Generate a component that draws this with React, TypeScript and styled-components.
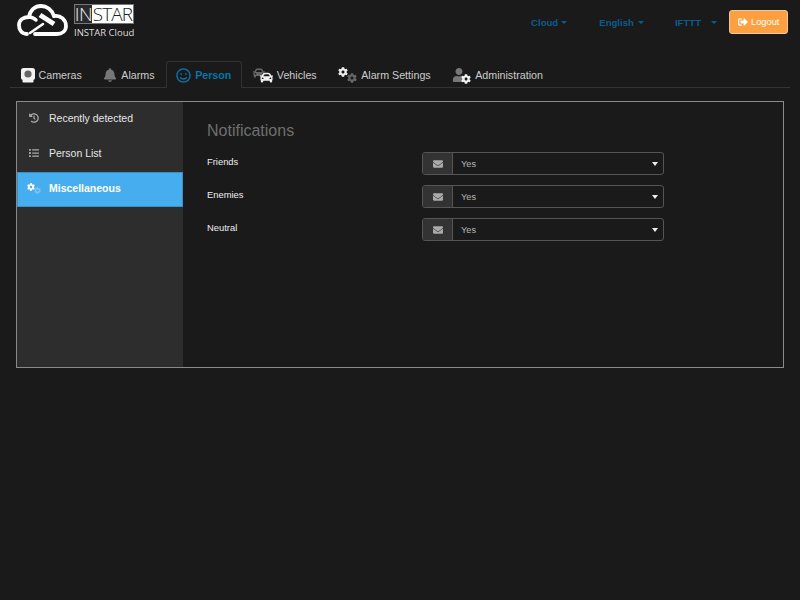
import React, { FC, ReactNode } from 'react';
import styled, { createGlobalStyle } from 'styled-components';
import { FaBell, FaCar, FaCog, FaEnvelope, FaHistory, FaList, FaRegSmile, FaSignOutAlt, FaUser } from 'react-icons/fa';

const GlobalStyle = createGlobalStyle`
    html, body {
        margin: 0;
        padding: 0;
        background: #1a1a1a;
        font-family: "Liberation Sans", Arial, sans-serif;
        font-size: 11px;
        color: #eee;
    }
`;

const Page = styled.div`
    width: 800px;
    height: 600px;
    overflow: hidden;
    background: #1a1a1a;
`;

const Header = styled.header`
    display: flex;
    justify-content: space-between;
    height: 61px;
    padding: 3px 12px 0 17px;
    box-sizing: border-box;
`;

const Brand = styled.div`
    display: flex;
    gap: 5px;
`;

const BrandText = styled.div`
    display: flex;
    flex-direction: column;
    padding-top: 1px;
`;

const BrandMark = styled.div`
    display: flex;
    width: 60px;
    height: 20px;
    background: #fff;
    border: 1px solid #777;
    box-sizing: border-box;
    font-size: 19px;
    line-height: 18px;
    font-family: "Open Sans", sans-serif;
    font-weight: 300;
    color: #222;
`;

const BrandIn = styled.span`
    display: flex;
    justify-content: center;
    width: 17px;
    background: #2a2a2a;
    color: #eee;
    letter-spacing: -0.5px;
`;

const BrandStar = styled.span`
    flex: 1;
    text-align: center;
    letter-spacing: -0.9px;
`;

const BrandName = styled.span`
    margin-top: 2px;
    font-family: "Open Sans", sans-serif;
    font-size: 9.5px;
    font-weight: 500;
    line-height: 14px;
    color: #ddd;
`;

const TopNav = styled.nav`
    display: flex;
    align-items: flex-start;
    padding-top: 7px;
`;

const TopLink = styled.a<{ $gap: number; $after: number }>`
    display: flex;
    align-items: center;
    gap: ${p => p.$gap}px;
    margin-right: ${p => p.$after}px;
    height: 24px;
    font-size: 9.6px;
    font-weight: 700;
    color: #0b5c8e;
`;

const Caret = styled.i`
    width: 0;
    height: 0;
    border-left: 3px solid transparent;
    border-right: 3px solid transparent;
    border-top: 3px solid currentColor;
`;

const LogoutButton = styled.button`
    display: flex;
    align-items: center;
    gap: 3px;
    width: 59px;
    height: 24px;
    padding: 0 0 0 8px;
    background: #ffa040;
    border: 1px solid #e8c9a8;
    border-radius: 3px;
    color: #fff;
    font-family: inherit;
    font-size: 9.3px;
    box-sizing: border-box;
`;

const Tabs = styled.div`
    display: flex;
    margin: 0 10px;
    height: 27px;
    border-bottom: 1px solid #333;
    box-sizing: border-box;
`;

const Tab = styled.div<{ $active?: boolean }>`
    display: flex;
    align-items: center;
    gap: 4px;
    height: 27px;
    padding: 1px 10px 0 9.5px;
    box-sizing: border-box;
    font-size: 10.7px;
    color: ${p => (p.$active ? '#0b73a8' : '#ccc')};
    font-weight: ${p => (p.$active ? 700 : 400)};
    border: 1px solid ${p => (p.$active ? '#333' : 'transparent')};
    border-bottom-color: ${p => (p.$active ? '#1a1a1a' : 'transparent')};
    border-radius: 3px 3px 0 0;
`;

const IconStack = styled.span<{ $w: number }>`
    position: relative;
    display: inline-block;
    width: ${p => p.$w}px;
    height: 16px;
    flex: none;
`;

const StackedIcon = styled.span<{ $x: number; $y: number; $c: string; $s: number }>`
    position: absolute;
    left: ${p => p.$x}px;
    top: ${p => p.$y}px;
    color: ${p => p.$c};
    font-size: ${p => p.$s}px;
    line-height: 0;
`;

const Panel = styled.section`
    display: flex;
    margin: 13px 16px 0 16px;
    height: 267px;
    border: 1px solid #8a8a8a;
    box-sizing: border-box;
`;

const Sidebar = styled.aside`
    width: 166px;
    background: #2d2d2d;
    flex: none;
`;

const SideItem = styled.div<{ $active?: boolean }>`
    display: flex;
    align-items: center;
    height: 35px;
    padding: 0 0 3px 11px;
    box-sizing: border-box;
    gap: 9px;
    font-size: 10.5px;
    font-weight: ${p => (p.$active ? 700 : 400)};
    color: ${p => (p.$active ? '#fff' : '#e6e6e6')};
    background: ${p => (p.$active ? '#46aeee' : 'transparent')};
    box-shadow: ${p => (p.$active ? 'inset 0 0 0 1px #3c8fc4' : 'none')};
`;

const SideIcon = styled.span<{ $color?: string }>`
    display: flex;
    width: 12px;
    justify-content: center;
    color: ${p => p.$color || '#aaa'};
    font-size: 10px;
`;

const Content = styled.main`
    flex: 1;
    padding: 19px 24px;
`;

const Title = styled.h2`
    margin: 0 0 11px;
    font-size: 16px;
    line-height: 20px;
    font-weight: 400;
    color: #6f6f6f;
`;

const FormRow = styled.div`
    display: flex;
    align-items: flex-start;
    height: 33.2px;
`;

const RowLabel = styled.label`
    width: 215px;
    font-size: 9.4px;
    line-height: 14px;
    color: #eee;
    margin-top: 3px;
`;

const SelectGroup = styled.div`
    display: flex;
    width: 242px;
    height: 23px;
    border: 1px solid #555;
    border-radius: 3px;
    box-sizing: border-box;
`;

const Addon = styled.span`
    display: flex;
    align-items: center;
    justify-content: center;
    width: 29px;
    background: #333;
    border-right: 1px solid #555;
    color: #aaa;
    font-size: 10px;
    border-radius: 2px 0 0 2px;
`;

const SelectBox = styled.div`
    flex: 1;
    display: flex;
    align-items: center;
    justify-content: space-between;
    padding: 0 5px 0 8px;
    font-size: 9.2px;
    color: #b5b5b5;
`;

const WhiteCaret = styled(Caret)`
    color: #eee;
    border-top-width: 4px;
`;

const LogoSvg: FC = () => (
    <svg width="52" height="34" viewBox="0 0 52 34" fill="none" stroke="#fff" strokeLinecap="round">
        <path
            d="M10 31 C4 31 2 26 2 22 C2 17 6 14 12 14 C13 7 18 3 24 3 C30 3 35 7 37 13 C44 12 49 17 49 23 C49 28 45 31 40 31 L18 31"
            strokeWidth="3.8"
        />
        <path d="M12 14 C15 14 17 15 19 17" strokeWidth="3.4" />
        <path d="M13 30 L26 21" strokeWidth="2.6" />
        <path d="M23 12 L37 21" strokeWidth="5" strokeLinecap="butt" />
    </svg>
);

const CameraIcon: FC = () => (
    <svg width="14" height="15" viewBox="0 0 14 15">
        <rect x="0" y="0" width="14" height="12" rx="2.5" fill="#f2f2f2" />
        <rect x="1.5" y="11" width="11" height="3.5" rx="0.8" fill="#f2f2f2" />
        <circle cx="7" cy="6" r="3.6" fill="#666" />
    </svg>
);

const Cars: FC = () => (
    <IconStack $w={20}>
        <StackedIcon $x={0} $y={0} $c="#666" $s={12}>
            <FaCar />
        </StackedIcon>
        <StackedIcon $x={7} $y={4} $c="#f2f2f2" $s={13}>
            <FaCar />
        </StackedIcon>
    </IconStack>
);

const Gears: FC = () => (
    <IconStack $w={19}>
        <StackedIcon $x={0} $y={0} $c="#eee" $s={10}>
            <FaCog />
        </StackedIcon>
        <StackedIcon $x={9} $y={6} $c="#666" $s={10}>
            <FaCog />
        </StackedIcon>
    </IconStack>
);

const UserGear: FC = () => (
    <IconStack $w={19}>
        <StackedIcon $x={0} $y={1} $c="#777" $s={14}>
            <FaUser />
        </StackedIcon>
        <StackedIcon $x={9} $y={7} $c="#f2f2f2" $s={10}>
            <FaCog />
        </StackedIcon>
    </IconStack>
);

const SmallGears: FC = () => (
    <IconStack $w={14}>
        <StackedIcon $x={0} $y={3} $c="#fff" $s={8}>
            <FaCog />
        </StackedIcon>
        <StackedIcon $x={7} $y={7} $c="#7cc4ef" $s={7}>
            <FaCog />
        </StackedIcon>
    </IconStack>
);

const tabs: { label: string; icon: ReactNode; active?: boolean }[] = [
    { label: 'Cameras', icon: <CameraIcon /> },
    { label: 'Alarms', icon: <FaBell color="#777" size={14} /> },
    { label: 'Person', icon: <FaRegSmile size={15} />, active: true },
    { label: 'Vehicles', icon: <Cars /> },
    { label: 'Alarm Settings', icon: <Gears /> },
    { label: 'Administration', icon: <UserGear /> },
];

const App: FC = () => (
    <Page>
        <GlobalStyle />
        <Header>
            <Brand>
                <LogoSvg />
                <BrandText>
                    <BrandMark>
                        <BrandIn>IN</BrandIn>
                        <BrandStar>STAR</BrandStar>
                    </BrandMark>
                    <BrandName>INSTAR Cloud</BrandName>
                </BrandText>
            </Brand>
            <TopNav>
                <TopLink $gap={3} $after={32}>
                    Cloud
                    <Caret />
                </TopLink>
                <TopLink $gap={4} $after={31}>
                    English
                    <Caret />
                </TopLink>
                <TopLink $gap={10} $after={12}>
                    IFTTT
                    <Caret />
                </TopLink>
                <LogoutButton>
                    <FaSignOutAlt size={10} />
                    Logout
                </LogoutButton>
            </TopNav>
        </Header>
        <Tabs>
            {tabs.map(t => (
                <Tab key={t.label} $active={t.active}>
                    {t.icon}
                    {t.label}
                </Tab>
            ))}
        </Tabs>
        <Panel>
            <Sidebar>
                <SideItem>
                    <SideIcon>
                        <FaHistory />
                    </SideIcon>
                    Recently detected
                </SideItem>
                <SideItem>
                    <SideIcon>
                        <FaList />
                    </SideIcon>
                    Person List
                </SideItem>
                <SideItem $active>
                    <SideIcon>
                        <SmallGears />
                    </SideIcon>
                    Miscellaneous
                </SideItem>
            </Sidebar>
            <Content>
                <Title>Notifications</Title>
                {['Friends', 'Enemies', 'Neutral'].map(name => (
                    <FormRow key={name}>
                        <RowLabel>{name}</RowLabel>
                        <SelectGroup>
                            <Addon>
                                <FaEnvelope />
                            </Addon>
                            <SelectBox>
                                Yes
                                <WhiteCaret />
                            </SelectBox>
                        </SelectGroup>
                    </FormRow>
                ))}
            </Content>
        </Panel>
    </Page>
);

export default App;
